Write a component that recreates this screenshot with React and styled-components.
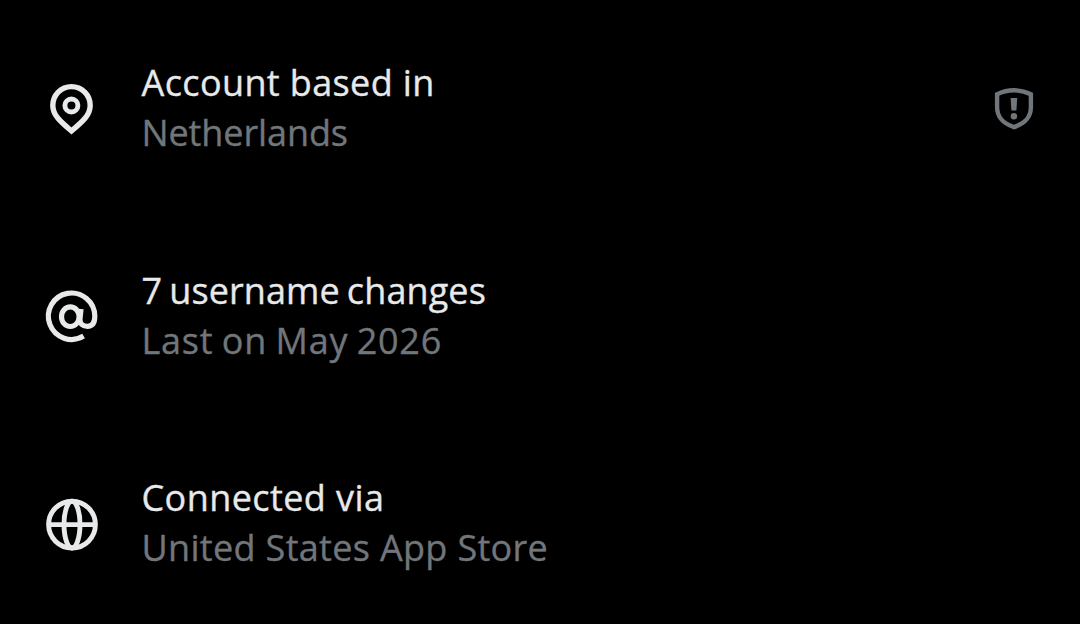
import React from 'react'
import styled, { createGlobalStyle } from 'styled-components';

const PinIcon = () => (
    <svg viewBox="0 0 62 62" fill="none" stroke="currentColor">
        <path strokeWidth="5.4" d="M30.5 8.6C20 8.6 11.8 17 11.8 27.4C11.8 36.8 18.8 43.2 30.5 53C42.2 43.2 49.2 36.8 49.2 27.4C49.2 17 41 8.6 30.5 8.6Z" />
        <circle cx="30.4" cy="27.5" r="6.5" strokeWidth="4.9" />
    </svg>
)

const AtIcon = () => (
    <svg viewBox="0 0.7 62 62" fill="none" stroke="currentColor" strokeWidth="5.2">
        <path d="M42.6 50.8A23.2 23.2 0 1 1 53.8 31C53.8 37.4 51.2 41 46.4 41C41.6 41 38.6 38.2 39 33.6L40 23.6" />
        <ellipse cx="29.3" cy="31.4" rx="8.8" ry="9.8" />
    </svg>
)

const GlobeIcon = () => (
    <svg viewBox="0 -0.8 62 62" fill="none" stroke="currentColor" strokeWidth="4.9">
        <circle cx="31" cy="30.8" r="23.4" />
        <ellipse cx="31" cy="30.8" rx="8" ry="23.4" />
        <path d="M7.6 30.8H54.4" />
    </svg>
)

const ShieldIcon = () => (
    <svg viewBox="0 0 48 48" fill="none">
        <path stroke="currentColor" strokeWidth="4.4" d="M24 5.3C29.5 5.3 35.5 6.6 40.9 9.3V22C40.9 32.8 34.8 38.4 24 42.1C13.2 38.4 7.1 32.8 7.1 22V9.3C12.5 6.6 18.5 5.3 24 5.3Z" />
        <path fill="currentColor" d="M20.6 13H27.2L26.4 25.6H21.4Z" />
        <circle fill="currentColor" cx="23.9" cy="31.3" r="3.2" />
    </svg>
)

const details = [
    { title: 'Account based in', value: 'Netherlands', icon: <PinIcon />, titleSpacing: 0.38, valueSpacing: -0.1, warning: true },
    { title: '7 username changes', value: 'Last on May 2026', icon: <AtIcon />, titleSpacing: 0.1, titleWordSpacing: -2.4, valueSpacing: 0.75, valueWordSpacing: -1.6 },
    { title: 'Connected via', value: 'United States App Store', icon: <GlobeIcon />, titleSpacing: 0.42, valueSpacing: 0.32 },
]

const App = () => {
    return (
        <>
            <GlobalStyle />
            <DetailList>
                {details.map((item) => (
                    <DetailRow key={item.title}>
                        <RowIcon>{item.icon}</RowIcon>
                        <RowText>
                            <Title $spacing={item.titleSpacing} $wordSpacing={item.titleWordSpacing}>{item.title}</Title>
                            <Value $spacing={item.valueSpacing} $wordSpacing={item.valueWordSpacing}>{item.value}</Value>
                        </RowText>
                        {item.warning && <WarningIcon><ShieldIcon /></WarningIcon>}
                    </DetailRow>
                ))}
            </DetailList>
        </>
    )
}

const GlobalStyle = createGlobalStyle`
    body {
        margin: 0;
        background: #000;
        overflow: hidden;
    }
    svg {
        display: block;
        width: 100%;
        height: 100%;
    }
`;

const DetailList = styled.main`
    box-sizing: border-box;
    height: 624px;
    padding: 59px 42px 0 41px;
    display: flex;
    flex-direction: column;
    gap: 107.5px;
    background: #000;
    font-family: 'Open Sans', 'Noto Sans', sans-serif;
`;

const DetailRow = styled.section`
    height: 100px;
    display: flex;
    align-items: center;
`;

const RowIcon = styled.div`
    width: 62px;
    height: 62px;
    margin-right: 38.5px;
    flex-shrink: 0;
    color: #e7e9ea;
`;

const RowText = styled.div`
    flex: 1;
    padding-bottom: 2px;
    white-space: nowrap;
`;

const Line = styled.p`
    margin: 0;
    font-size: 36px;
    line-height: 50px;
    letter-spacing: ${({ $spacing }) => $spacing}px;
    word-spacing: ${({ $wordSpacing = 0 }) => $wordSpacing}px;
    -webkit-text-stroke: 0.35px currentColor;
`;

const Title = styled(Line)`
    color: #e7e9ea;
`;

const Value = styled(Line)`
    color: #71767b;
`;

const WarningIcon = styled.div`
    width: 48px;
    height: 48px;
    flex-shrink: 0;
    color: #71767b;
`;

export default App
